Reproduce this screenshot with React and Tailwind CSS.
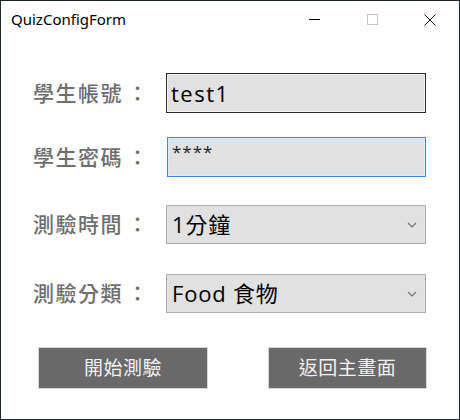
import React from "react";

const Label = ({ text }) => (
  <div className="w-[165px] pl-[32px] flex items-center text-[21px] font-medium leading-none text-[#6e6e6e] whitespace-nowrap">
    <span className="tracking-[1.5px]">{text}</span>
    <span className="ml-[4px]">：</span>
  </div>
);

const Chevron = () => (
  <svg width="10" height="6" viewBox="0 0 10 6" className="absolute right-[8px] top-1/2 -translate-y-1/2">
    <path d="M1 1 L5 5 L9 1" fill="none" stroke="#707070" strokeWidth="1.2" />
  </svg>
);

const Combo = ({ text }) => (
  <div className="relative w-[260px] h-[39px] bg-[#e1e1e1] border border-[#adadad] flex items-center pl-[5px] text-[22px] tracking-[0.8px] text-black">
    {text}
    <Chevron />
  </div>
);

const App = () => {
  return (
    <div
      className="w-[460px] h-[420px] bg-white border border-[#1b2727] flex flex-col"
      style={{ fontFamily: '"Open Sans", "Noto Sans CJK TC", sans-serif' }}
    >
      {/* title bar */}
      <div className="h-[37px] flex items-center relative">
        <span className="pl-[10px] text-[15px] text-black" style={{ fontFamily: '"Noto Sans", sans-serif' }}>
          QuizConfigForm
        </span>
        <div className="ml-auto flex items-center h-full">
          <div className="w-[58px] flex justify-center">
            <div className="w-[11px] h-px bg-black"></div>
          </div>
          <div className="w-[58px] flex justify-center">
            <div className="w-[11px] h-[11px] border border-[#c4c4c4]"></div>
          </div>
          <div className="w-[58px] flex justify-center">
            <svg width="12" height="12" viewBox="0 0 12 12">
              <path d="M0.5 0.5 L11.5 11.5 M11.5 0.5 L0.5 11.5" stroke="#111" strokeWidth="1" />
            </svg>
          </div>
        </div>
      </div>

      <div className="flex flex-col">
        <div className="flex items-center mt-[35px]">
          <Label text="學生帳號" />
          <div className="w-[260px] h-[40px] bg-[#e1e1e1] border border-[#2b2b2b] shadow-[inset_0_0_0_1px_#f4f4f4] flex items-center pl-[4px] text-[22px] tracking-[1.5px] text-black">
            test1
          </div>
        </div>
        <div className="flex items-center mt-[24px]">
          <Label text="學生密碼" />
          <div className="w-[259px] h-[40px] ml-px bg-[#e1e1e1] border border-[#3c8fdc] shadow-[inset_0_0_0_1px_#d8ebfa] flex items-start pt-[5px] pl-[4px] text-[17px] leading-none tracking-[1px] text-[#222]">
            ****
          </div>
        </div>
        <div className="flex items-center mt-[28px]">
          <Label text="測驗時間" />
          <Combo text="1分鐘" />
        </div>
        <div className="flex items-center mt-[30px]">
          <Label text="測驗分類" />
          <Combo text="Food 食物" />
        </div>
        <div className="flex mt-[34px] pl-[37px]">
          <button className="w-[170px] h-[42px] bg-[#696969] border border-[#d6d6d6] text-[#f2f2f2] text-[19px] tracking-[0.5px]">
            開始測驗
          </button>
          <button className="ml-[60px] w-[159px] h-[42px] bg-[#696969] border border-[#d6d6d6] text-[#f2f2f2] text-[19px] tracking-[0.5px]">
            返回主畫面
          </button>
        </div>
      </div>
    </div>
  );
};

export default App;
